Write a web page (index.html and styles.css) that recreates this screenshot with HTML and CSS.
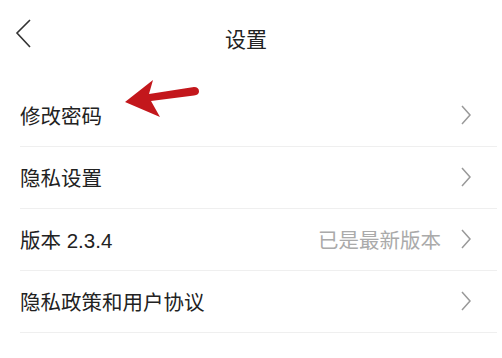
FILE: index.html
```html
<!DOCTYPE html>
<html lang="zh-CN">
<head>
    <meta charset="UTF-8">
    <meta name="viewport" content="width=device-width, initial-scale=1.0">
    <title>设置</title>
    <link rel="stylesheet" href="styles.css">
</head>
<body>
    <div class="page">
        <header class="top-bar">
            <a class="back" href="#">
                <svg width="18" height="30" viewBox="0 0 18 30">
                    <polyline points="15,1 2,14 15,28" fill="none" stroke="#333" stroke-width="1.6"/>
                </svg>
            </a>
            <h1>设置</h1>
        </header>

        <ul class="menu">
            <li class="menu-item">
                <span class="label">修改密码</span>
                <svg class="chevron" width="10" height="20" viewBox="0 0 10 20"><polyline points="1,1 9,10 1,19" fill="none" stroke="#999" stroke-width="1.5"/></svg>
                <!-- red pointer arrow drawn over the row -->
                <svg class="pointer" width="82" height="46" viewBox="0 0 82 46">
                    <path d="M5,26 L33,4 L29,18 L74,11 Q79,11 79,15.5 Q79,19 74,19.5 L31,25 L40,41 Z" fill="#c3171c"/>
                </svg>
            </li>
            <li class="menu-item">
                <span class="label">隐私设置</span>
                <svg class="chevron" width="10" height="20" viewBox="0 0 10 20"><polyline points="1,1 9,10 1,19" fill="none" stroke="#999" stroke-width="1.5"/></svg>
            </li>
            <li class="menu-item">
                <span class="label">版本 2.3.4</span>
                <span class="note">已是最新版本</span>
                <svg class="chevron" width="10" height="20" viewBox="0 0 10 20"><polyline points="1,1 9,10 1,19" fill="none" stroke="#999" stroke-width="1.5"/></svg>
            </li>
            <li class="menu-item">
                <span class="label">隐私政策和用户协议</span>
                <svg class="chevron" width="10" height="20" viewBox="0 0 10 20"><polyline points="1,1 9,10 1,19" fill="none" stroke="#999" stroke-width="1.5"/></svg>
            </li>
        </ul>
    </div>
</body>
</html>
```

FILE: styles.css
```css
* {
    margin: 0;
    padding: 0;
    box-sizing: border-box;
}

body {
    background: #fff;
    color: #222;
    font-family: "Liberation Sans", "Noto Sans CJK SC", sans-serif;
}

.page {
    width: 502px;
    height: 358px;
    overflow: hidden;
}

.top-bar {
    position: relative;
    height: 76px;
    display: flex;
    align-items: center;
    justify-content: center;
}

.back {
    position: absolute;
    left: 15px;
    top: 19px;
    display: block;
    width: 18px;
    height: 30px;
}

.back svg {
    display: block;
}

.top-bar h1 {
    font-size: 21px;
    font-weight: normal;
    color: #222;
    margin-left: -10px;
}

.menu {
    list-style: none;
    padding-top: 9px;
}

.menu-item {
    position: relative;
    display: flex;
    align-items: center;
    height: 62px;
    margin: 0 5px 0 20px;
    padding: 0 26px 2px 0;
    border-bottom: 1px solid #efefef;
}

.label {
    flex: 1;
    font-size: 20.5px;
    color: #222;
}

.note {
    font-size: 20.5px;
    color: #aaa;
    margin-right: 20px;
}

.chevron {
    display: block;
}

.pointer {
    position: absolute;
    left: 100px;
    top: -9px;
}
```
